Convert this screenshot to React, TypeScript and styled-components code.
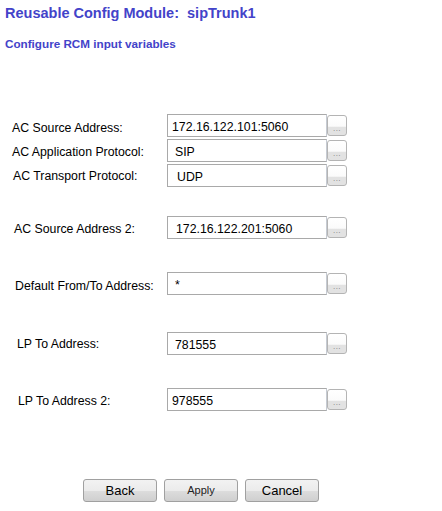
import React from "react";
import styled, { createGlobalStyle } from "styled-components";

const Global = createGlobalStyle`
  html, body { margin: 0; padding: 0; background: #ffffff; }
  body { font-family: "Liberation Sans", Arial, sans-serif; color: #000; }
`;

const Page = styled.div`
  width: 442px;
  height: 511px;
  display: flex;
  flex-direction: column;
  overflow: hidden;
`;

const Title = styled.h1`
  margin: 5px 0 0 5px;
  font-size: 14.5px;
  line-height: 17px;
  font-weight: bold;
  color: #4343c9;
  white-space: pre;
`;

const Subtitle = styled.h2`
  margin: 15px 0 0 5px;
  font-size: 11.7px;
  line-height: 14px;
  font-weight: bold;
  color: #4343c9;
`;

const Form = styled.div`
  display: flex;
  flex-direction: column;
  margin-top: 63px;
`;

const Row = styled.div<{ $gap: number }>`
  display: grid;
  grid-template-columns: 167px 160px 20px;
  align-items: center;
  margin-top: ${(p) => p.$gap}px;
  height: 23px;
`;

const Label = styled.label<{ $indent: number; $drop: number }>`
  padding-left: ${(p) => p.$indent}px;
  padding-top: ${(p) => p.$drop}px;
  font-size: 12.3px;
  line-height: 14px;
  color: #000;
  white-space: nowrap;
`;

const TextBox = styled.input<{ $pad: number }>`
  box-sizing: border-box;
  width: 160px;
  height: 23px;
  margin: 0;
  padding: 2px 2px 0 ${(p) => p.$pad}px;
  border: 1px solid #a9a9a9;
  border-right-color: #c6cbd3;
  background: #ffffff;
  font-family: "Liberation Sans", Arial, sans-serif;
  font-size: 12.3px;
  color: #000;
  outline: none;
`;

const DotsButton = styled.button`
  box-sizing: border-box;
  width: 20px;
  height: 21px;
  margin: 0;
  padding: 0 0 2px 0;
  border: 1px solid #b4b4b4;
  border-radius: 3px;
  background: linear-gradient(to bottom, #ffffff 0%, #fbfbfb 55%, #e2e2e2 56%, #e2e2e2 100%);
  display: flex;
  align-items: flex-end;
  justify-content: center;
  font-family: "Liberation Sans", Arial, sans-serif;
  font-size: 8px;
  line-height: 8px;
  color: #7a7a7a;
  letter-spacing: 0.5px;
`;

const Actions = styled.div`
  display: flex;
  gap: 7px;
  margin: 68px 0 0 83px;
`;

const ActionButton = styled.button<{ $small?: boolean }>`
  box-sizing: border-box;
  width: 74px;
  height: 23px;
  margin: 0;
  padding: 0 0 1px 0;
  border: 1px solid #a0a0a0;
  border-radius: 3px;
  background: linear-gradient(to bottom, #f2f2f2 0%, #ebebeb 50%, #dddddd 51%, #cfcfcf 100%);
  font-family: "Liberation Sans", Arial, sans-serif;
  font-size: ${(p) => (p.$small ? "11px" : "13px")};
  color: ${(p) => (p.$small ? "#222" : "#000")};
`;

type Field = {
  label: string;
  value: string;
  gap: number;
  indent: number;
  drop: number;
  pad: number;
};

const fields: Field[] = [
  { label: "AC Source Address:", value: "172.16.122.101:5060", gap: 0, indent: 12, drop: 4, pad: 4 },
  { label: "AC Application Protocol:", value: "SIP", gap: 2, indent: 12, drop: 2, pad: 7 },
  { label: "AC Transport Protocol:", value: "UDP", gap: 2, indent: 13, drop: 0, pad: 9 },
  { label: "AC Source Address 2:", value: "172.16.122.201:5060", gap: 29, indent: 14, drop: 2, pad: 8 },
  { label: "Default From/To Address:", value: "*", gap: 33, indent: 15, drop: 4, pad: 7 },
  { label: "LP To Address:", value: "781555", gap: 37, indent: 17, drop: 0, pad: 7 },
  { label: "LP To Address 2:", value: "978555", gap: 33, indent: 18, drop: 2, pad: 4 },
];

export default function App() {
  return (
    <Page>
      <Global />
      <Title>{"Reusable Config Module:  sipTrunk1"}</Title>
      <Subtitle>Configure RCM input variables</Subtitle>
      <Form>
        {fields.map((f) => (
          <Row key={f.label} $gap={f.gap}>
            <Label $indent={f.indent} $drop={f.drop}>{f.label}</Label>
            <TextBox $pad={f.pad} defaultValue={f.value} />
            <DotsButton type="button">...</DotsButton>
          </Row>
        ))}
      </Form>
      <Actions>
        <ActionButton type="button">Back</ActionButton>
        <ActionButton type="button" $small>Apply</ActionButton>
        <ActionButton type="button">Cancel</ActionButton>
      </Actions>
    </Page>
  );
}
